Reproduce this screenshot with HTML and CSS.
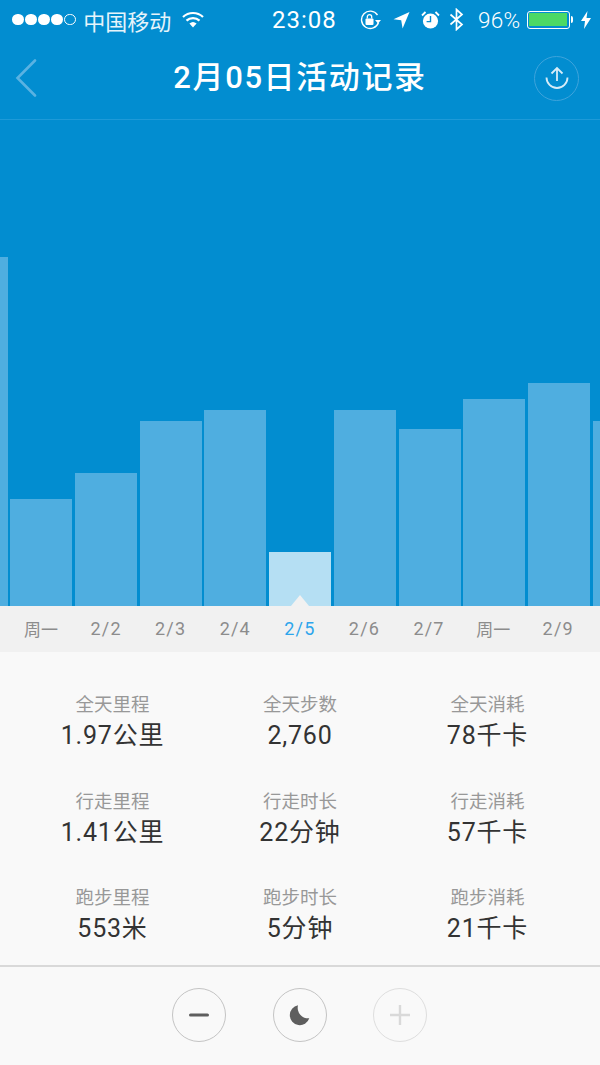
FILE: index.html
```html
<!DOCTYPE html>
<html lang="zh">
<head>
<meta charset="utf-8">
<title>2月05日活动记录</title>
<link rel="stylesheet" href="styles.css">
</head>
<body>
<div class="page">
  <section class="hero">
    <div class="status">
      <div class="status-left">
        <span class="dots"><i class="dot"></i><i class="dot"></i><i class="dot"></i><i class="dot"></i><i class="dot dot-empty"></i></span>
        <span class="carrier">中国移动</span>
        <svg class="wifi" width="22" height="17" viewBox="0 0 22 17"><path d="M1 6a14.5 14.5 0 0 1 20 0" fill="none" stroke="#fff" stroke-width="2.2"/><path d="M4.5 9.6a9.5 9.5 0 0 1 13 0" fill="none" stroke="#fff" stroke-width="2.2"/><path d="M11 16.5 7.4 12.6a5.4 5.4 0 0 1 7.2 0z" fill="#fff"/></svg>
      </div>
      <span class="time">23:08</span>
      <div class="status-right">
        <svg width="22" height="20" viewBox="0 0 22 20"><path d="M18.5 12.5A8.7 8.7 0 1 1 17.5 5" fill="none" stroke="#fff" stroke-width="1.4"/><path d="m15 10 6 0-3 3.4z" fill="#fff"/><rect x="5.5" y="8.5" width="8" height="6.5" rx="1" fill="#fff"/><path d="M7.3 8.5V6.8a2.2 2.2 0 0 1 4.4 0v1.7" fill="none" stroke="#fff" stroke-width="1.3"/></svg>
        <svg class="gap-loc" width="17" height="18" viewBox="0 0 17 18"><path d="M16.5 1 9.6 17.5 8.2 9.2 0.5 8.2z" fill="#fff"/></svg>
        <svg class="gap-alarm" width="19" height="20" viewBox="0 0 19 20"><circle cx="9.5" cy="11" r="7.6" fill="#fff"/><path d="M9.5 6v5.6H5.6" fill="none" stroke="#058dd0" stroke-width="1.4"/><path d="M1 5.5 4.5 2M18 5.5 14.5 2" stroke="#fff" stroke-width="1.8" fill="none"/></svg>
        <svg class="gap-bt" width="15" height="23" viewBox="0 0 15 23"><path d="M1.5 6.5 13 16.5 7.5 21.5V1.5L13 6.5 1.5 16.5" fill="none" stroke="#fff" stroke-width="1.7"/></svg>
        <span class="battery-text">96%</span>
        <span class="battery"><span class="battery-fill"></span></span>
        <span class="battery-tip"></span>
        <svg class="bolt" width="10" height="18" viewBox="0 0 10 18"><path d="M6.5 0 0 10h4l-1 8 7-11H5.500z" fill="#fff"/></svg>
      </div>
    </div>
    <header class="nav">
      <svg class="back" width="22" height="38" viewBox="0 0 22 38"><path d="M20 1.500 2.500 19 20 36.500" fill="none" stroke="#5ab2e2" stroke-width="2.600" stroke-linecap="round"/></svg>
      <h1 class="title">2月05日活动记录</h1>
      <span class="share">
        <svg width="26" height="27" viewBox="0 0 26 27"><path d="M2.500 12.500a10.500 10.500 0 0 0 21 0" fill="none" stroke="#d6ecf8" stroke-width="1.800"/><path d="M13 16V3M7.500 8.500 13 3l5.500 5.500" fill="none" stroke="#d6ecf8" stroke-width="1.800"/></svg>
      </span>
    </header>
    <div class="chart">
      <div class="bar" style="height:349px"></div>
      <div class="bar" style="height:107px"></div>
      <div class="bar" style="height:133px"></div>
      <div class="bar" style="height:185px"></div>
      <div class="bar" style="height:196px"></div>
      <div class="bar bar-active" style="height:54px"></div>
      <div class="bar" style="height:196px"></div>
      <div class="bar" style="height:177px"></div>
      <div class="bar" style="height:207px"></div>
      <div class="bar" style="height:223px"></div>
      <div class="bar" style="height:185px"></div>
    </div>
  </section>
  <nav class="days">
    <span class="day day-week">周一</span>
    <span class="day">2/2</span>
    <span class="day">2/3</span>
    <span class="day">2/4</span>
    <span class="day day-active">2/5</span>
    <span class="day">2/6</span>
    <span class="day">2/7</span>
    <span class="day day-week">周一</span>
    <span class="day">2/9</span>
  </nav>
  <section class="stats">
    <div class="stat"><span class="label">全天里程</span><span class="value">1.97公里</span></div>
    <div class="stat"><span class="label">全天步数</span><span class="value">2,760</span></div>
    <div class="stat"><span class="label">全天消耗</span><span class="value">78千卡</span></div>
    <div class="stat"><span class="label">行走里程</span><span class="value">1.41公里</span></div>
    <div class="stat"><span class="label">行走时长</span><span class="value">22分钟</span></div>
    <div class="stat"><span class="label">行走消耗</span><span class="value">57千卡</span></div>
    <div class="stat"><span class="label">跑步里程</span><span class="value">553米</span></div>
    <div class="stat"><span class="label">跑步时长</span><span class="value">5分钟</span></div>
    <div class="stat"><span class="label">跑步消耗</span><span class="value">21千卡</span></div>
  </section>
  <footer class="actions">
    <button class="round"><svg width="20" height="4" viewBox="0 0 20 4"><rect width="20" height="3" y="0.500" rx="1.500" fill="#5e5e5e"/></svg></button>
    <button class="round"><svg width="21" height="21" viewBox="0 0 21 21"><path d="M9 0.300A10 10 0 1 0 20.300 13.300 10.500 10.500 0 0 1 9 0.300z" fill="#5e5e5e"/></svg></button>
    <button class="round round-off"><svg width="20" height="20" viewBox="0 0 20 20"><path d="M10 0v20M0 10h20" stroke="#d9d9d9" stroke-width="2.400"/></svg></button>
  </footer>
</div>
</body>
</html>
```
FILE: styles.css
```css
* { box-sizing: border-box; }
html, body { margin: 0; padding: 0; }
body {
  width: 600px;
  height: 1065px;
  overflow: hidden;
  background: #f9f9f9;
  font-family: Roboto, "Noto Sans CJK SC", sans-serif;
}
.page { display: flex; flex-direction: column; height: 1065px; }
.hero {
  height: 606px;
  display: flex;
  flex-direction: column;
  background: #028dd0;
  color: #fff;
}
.status {
  height: 39px;
  display: flex;
  align-items: center;
  padding: 0 9px 0 12px;
  font-size: 22px;
}
.status-left { width: 260px; display: flex; align-items: center; }
.dots { display: flex; gap: 1.300px; }
.dot { width: 11.800px; height: 11.800px; border-radius: 50%; background: #fff; }
.dot-empty { background: none; border: 1px solid #fff; }
.carrier {
  margin-left: 7px;
  color: #e6f4fb;
  font-family: "Noto Sans CJK SC", sans-serif;
  line-height: 30px;
}
.wifi { margin-left: 11px; }
.time { width: 88px; font-size: 24px; letter-spacing: 1px; }
.status-right { display: flex; align-items: center; flex: 1; }
.gap-loc { margin-left: 11px; }
.gap-alarm { margin-left: 11px; }
.gap-bt { margin-left: 9px; }
.battery-text { margin-left: 14px; font-size: 22.500px; letter-spacing: 0.300px; font-weight: 300; }
.battery {
  margin-left: 6px;
  width: 43px;
  height: 18px;
  border: 1px solid #fff;
  border-radius: 3px;
  padding: 1.500px;
  display: flex;
}
.battery-fill { flex: 1; background: #4cd964; }
.battery-tip { width: 2px; height: 7px; background: #fff; margin-left: 1px; border-radius: 0 2px 2px 0; }
.bolt { margin-left: 8px; }
.nav {
  height: 81px;
  padding: 0 21px 2px;
  display: grid;
  grid-template-columns: 1fr auto 1fr;
  align-items: center;
  border-bottom: 1px solid #1e9ad8;
}
.back { margin-left: -6px; }
.title {
  margin: 0;
  font-size: 31px;
  font-weight: 500;
  letter-spacing: 1.600px;
  line-height: 40px;
}
.share {
  justify-self: end;
  width: 45px;
  height: 45px;
  border: 1px solid #3ea4dc;
  border-radius: 50%;
  display: flex;
  align-items: center;
  justify-content: center;
}
.chart {
  flex: 1;
  display: flex;
  align-items: flex-end;
  gap: 2.700px;
  margin-left: -54.300px;
  overflow: hidden;
}
.bar { flex: 0 0 62px; background: #4faee0; }
.bar-active { background: #b5dff3; position: relative; }
.bar-active::after {
  content: "";
  position: absolute;
  left: 22px;
  bottom: 0;
  border-left: 9px solid transparent;
  border-right: 9px solid transparent;
  border-bottom: 11px solid #f1f1f1;
}
.days {
  height: 46px;
  padding-left: 10px;
  display: flex;
  gap: 2.600px;
  align-items: center;
  background: #f1f1f1;
  color: #8c8c8c;
  font-size: 18px;
}
.day { flex: 0 0 62px; padding-left: 1px; text-align: center; letter-spacing: 1.200px; line-height: 26px; }
.day-week { padding-left: 0; font-family: "Noto Sans CJK SC", sans-serif; font-size: 17px; letter-spacing: 0; }
.day-active { color: #2da5ec; }
.stats {
  height: 315px;
  padding: 35px 19px 0;
  display: grid;
  grid-template-columns: 187px 188px 187px;
  grid-auto-rows: 96.500px;
  align-content: start;
  border-bottom: 2px solid #d9d9d9;
}
.stat { display: flex; flex-direction: column; align-items: center; gap: 3px; }
.label { font-size: 18.500px; line-height: 32px; color: #989898; font-family: "Noto Sans CJK SC", sans-serif; }
.value { font-size: 25px; line-height: 28px; color: #333; letter-spacing: 0.800px; }
.actions {
  flex: 1;
  display: flex;
  justify-content: center;
  align-items: center;
  gap: 46.500px;
  padding: 0 1px 2px 0;
}
.round {
  width: 54px;
  height: 54px;
  padding: 0;
  border: 1px solid #c4c4c4;
  border-radius: 50%;
  background: none;
  display: flex;
  align-items: center;
  justify-content: center;
}
.round-off { border-color: #dedede; }
```
